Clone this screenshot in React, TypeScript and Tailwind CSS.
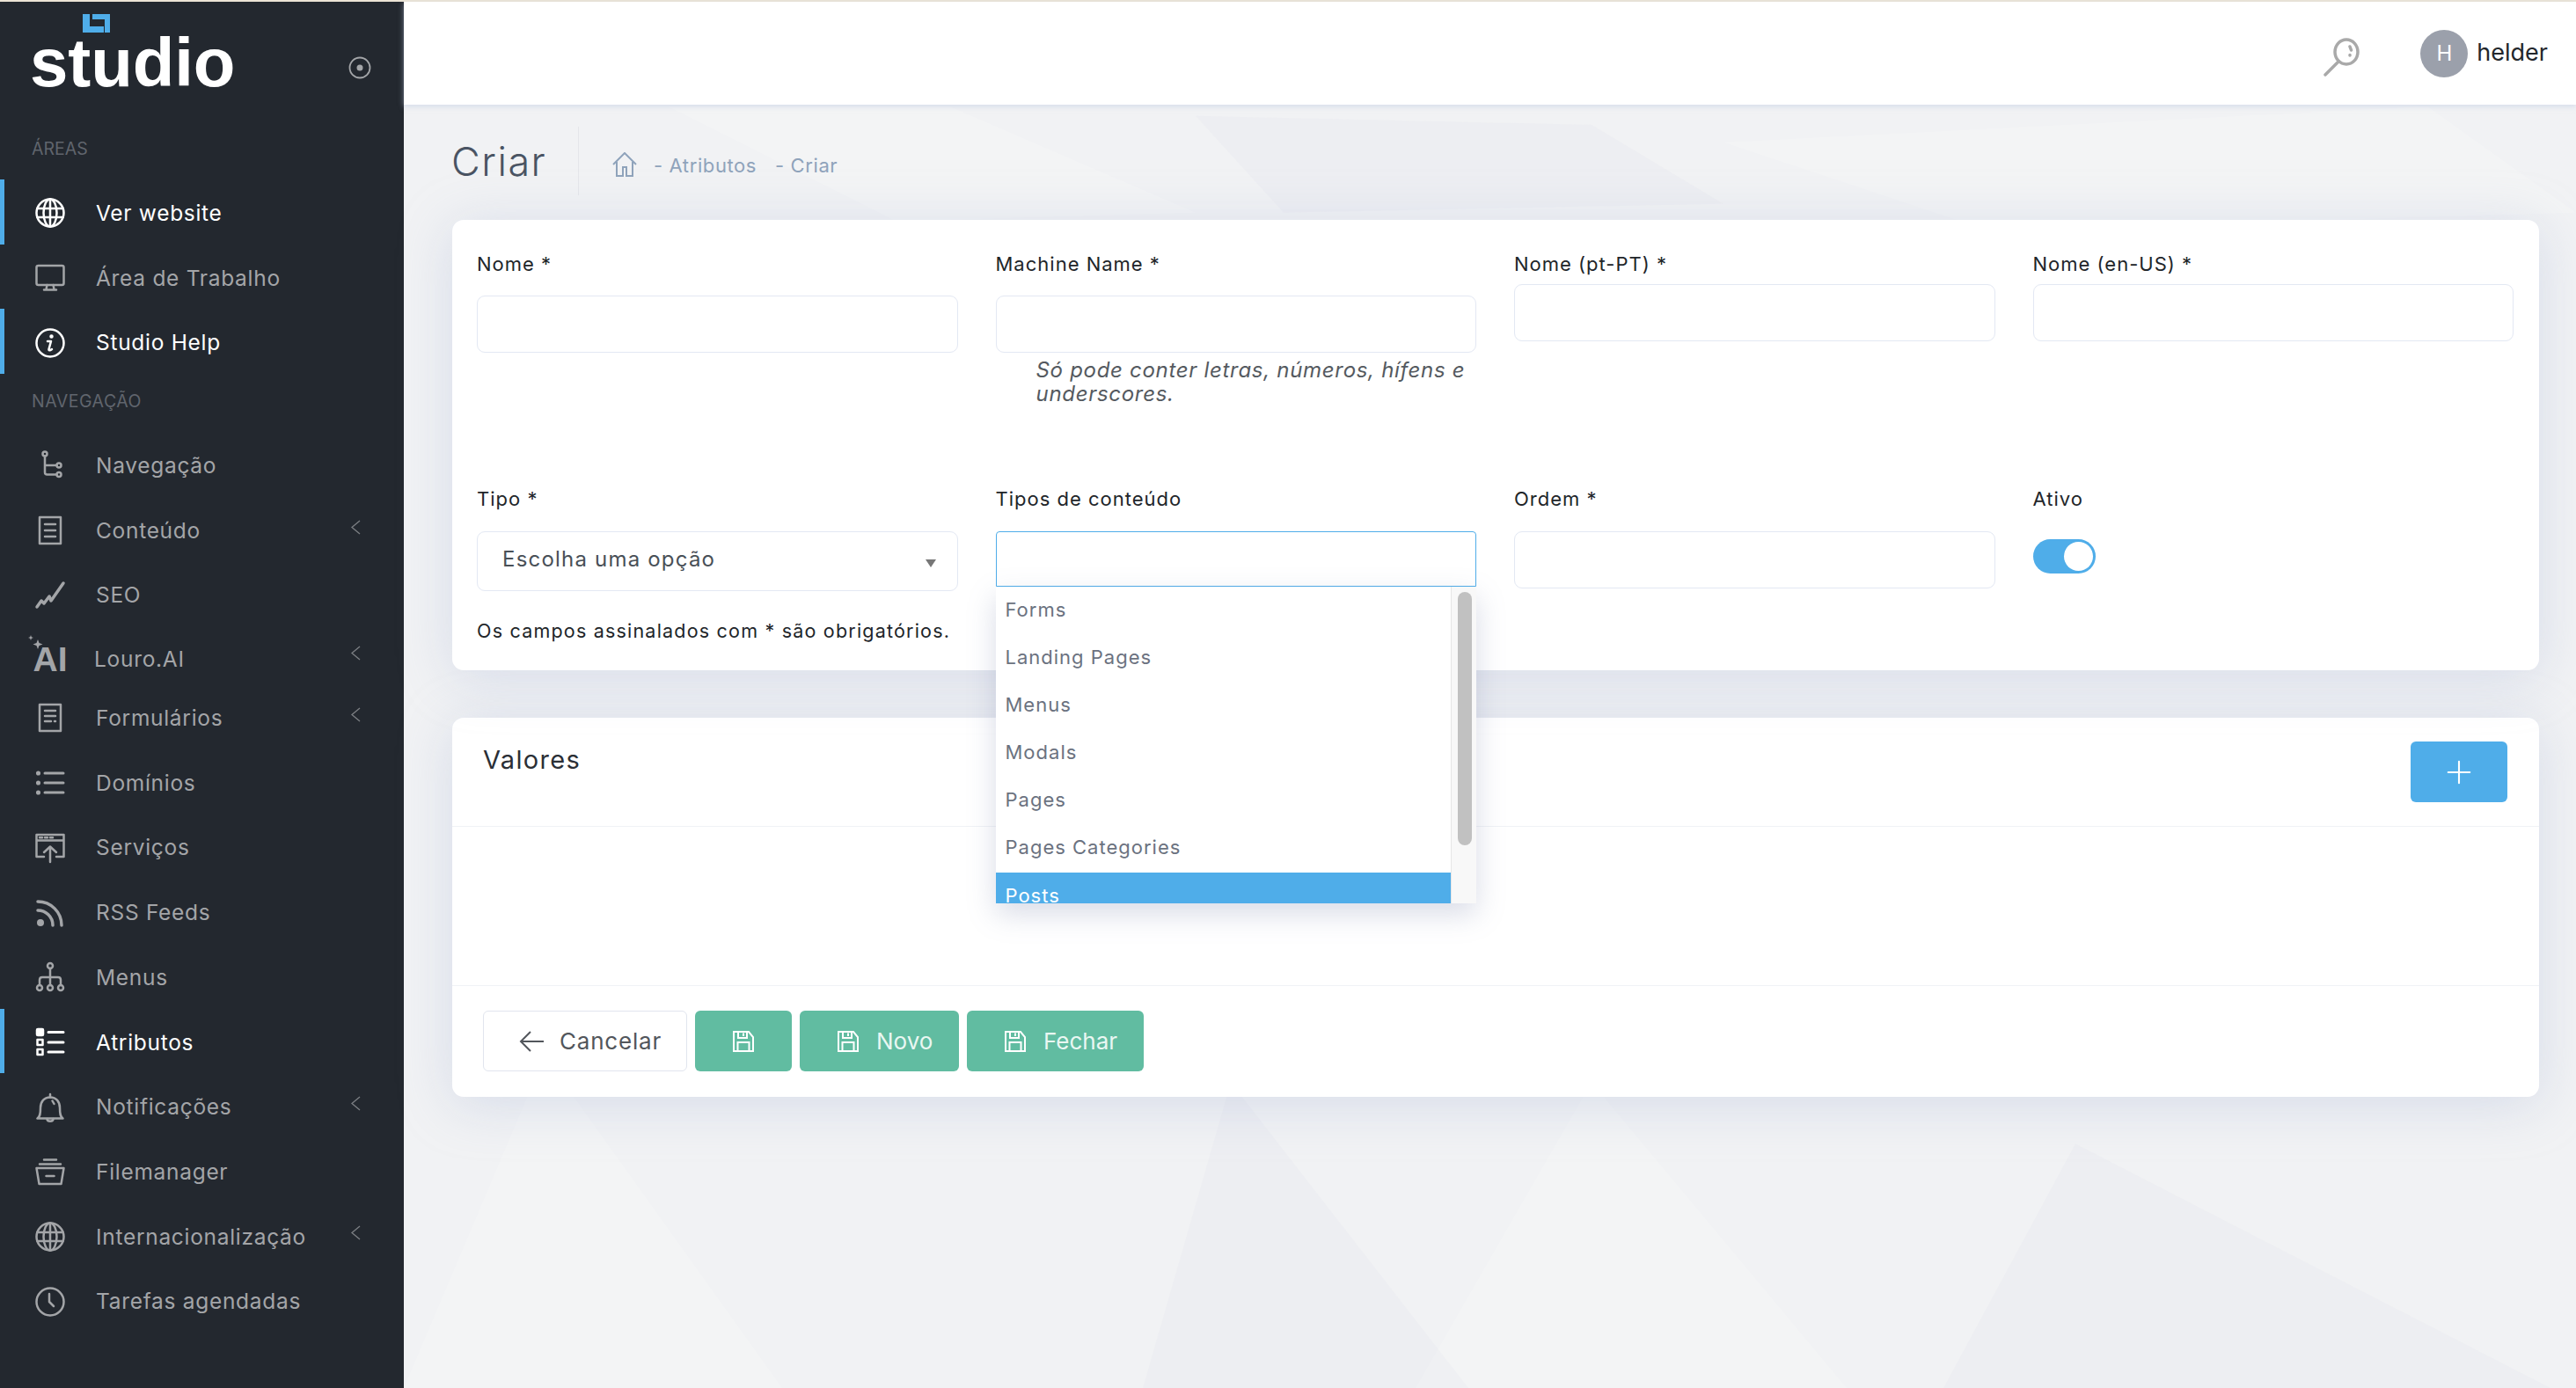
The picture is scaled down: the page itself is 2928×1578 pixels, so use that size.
import type { ReactNode } from 'react'
import { Plus } from 'lucide-react'

const font = { fontFamily: 'Inter, "Open Sans", sans-serif' }

function Ic({ children }: { children: ReactNode }) {
  return (
    <svg width="36" height="36" viewBox="0 0 36 36" fill="none" stroke="currentColor" strokeWidth="2.5" strokeLinecap="round" strokeLinejoin="round">
      {children}
    </svg>
  )
}

const GlobeIcon = () => (
  <Ic>
    <circle cx="18" cy="18" r="15.5" />
    <ellipse cx="18" cy="18" rx="7.5" ry="15.5" />
    <path d="M18 2.5v31M3.5 13h29M3.5 23h29" />
  </Ic>
)
const MonitorIcon = () => (
  <Ic>
    <rect x="2.5" y="4" width="31" height="22" rx="2" />
    <path d="M14.5 26l-1 5M21.5 26l1 5M11 31.5h14" />
  </Ic>
)
const InfoIcon = () => (
  <Ic>
    <circle cx="18" cy="18" r="15.5" />
    <circle cx="19.5" cy="10.5" r="1" fill="currentColor" />
    <path d="M15 16h4l-2.5 9c-.3 1.5 1 2 3.5 0" />
  </Ic>
)
const TreeIcon = () => (
  <Ic>
    <circle cx="12" cy="5" r="2.5" />
    <circle cx="28" cy="18" r="2.5" />
    <circle cx="28" cy="28.5" r="2.5" />
    <path d="M12 7.5V26c0 2 1 2.5 2.5 2.5h11M12 18h13.5" />
  </Ic>
)
const DocIcon = () => (
  <Ic>
    <rect x="6" y="3" width="24" height="30" />
    <path d="M12 11h12M12 18h12M12 25h12" />
  </Ic>
)
const FormIcon = () => (
  <Ic>
    <rect x="6" y="3" width="24" height="30" />
    <path d="M12 10h12M12 16h12M12 22h7M23 22h1" />
  </Ic>
)
const SeoIcon = () => (
  <Ic>
    <path strokeWidth="3.5" d="M3 31l5-7 3 3 6-8 2 5 14-20" />
  </Ic>
)
const ListIcon = () => (
  <Ic>
    <circle cx="4.5" cy="7" r="1.3" fill="currentColor" />
    <circle cx="4.5" cy="18" r="1.3" fill="currentColor" />
    <circle cx="4.5" cy="29" r="1.3" fill="currentColor" />
    <path strokeWidth="3" d="M12 7h21M12 18h21M12 29h21" />
  </Ic>
)
const ServiceIcon = () => (
  <Ic>
    <path d="M11 28H2.5V3h31v25H25M2.5 9.5h31M6 6.3h3M12 6.3h3M18 6.3h3" />
    <path d="M18 34V17M11 23l7-6.5 7 6.5" />
  </Ic>
)
const RssIcon = () => (
  <Ic>
    <circle cx="7" cy="29" r="4" fill="currentColor" stroke="none" />
    <path strokeWidth="3.5" d="M4 15c9 0 17 7 17 17M4 5c15 0 27 12 27 27" />
  </Ic>
)
const MenuTreeIcon = () => (
  <Ic>
    <circle cx="18" cy="5" r="3" />
    <circle cx="6" cy="30" r="3" />
    <circle cx="18" cy="30" r="3" />
    <circle cx="30" cy="30" r="3" />
    <path d="M18 8v19M6 27v-6c0-2 1-3 3-3h18c2 0 3 1 3 3v6" />
  </Ic>
)
const AttrIcon = () => (
  <Ic>
    <rect x="3" y="3" width="7" height="7" rx="1" fill="currentColor" />
    <rect x="3.5" y="15" width="6" height="6" />
    <rect x="3.5" y="26" width="6" height="6" />
    <path strokeWidth="3" d="M16 6.5h17M16 18h17M16 29h17" />
  </Ic>
)
const BellIcon = () => (
  <Ic>
    <path d="M3.5 30.5h29c-3-2-3.5-5-3.5-12 0-7-4-12-11-12s-11 5-11 12c0 7-.5 10-3.500 12z" />
    <path d="M18 6.500V3M14.500 31c0 3.500 7 3.500 7 0M20.500 10.500l2 3.500" />
  </Ic>
)
const BasketIcon = () => (
  <Ic>
    <path d="M2.5 14l3 18h25l3-18-31 0M6 9.500h24M11 4.500h14M13.500 23h9" />
  </Ic>
)
const ClockIcon = () => (
  <Ic>
    <circle cx="18" cy="18" r="15.5" />
    <path d="M17 9v9l5 5" />
  </Ic>
)
const AiIcon = () => (
  <span className="relative flex w-[36px] h-[36px] items-end justify-center">
    <svg className="absolute left-[-7px] top-[-9px]" width="20" height="20" viewBox="0 0 20 20" fill="currentColor">
      <path d="M11 5l1.5 4 4 1.5-4 1.5-1.500 4-1.500-4-4-1.500 4-1.500zM3 0l.8 2.2L6 3l-2.200.8L3 6l-.8-2.200L0 3l2.200-.8z" />
    </svg>
    <span className="text-[39px] leading-[34px] font-bold" style={{ fontFamily: '"Liberation Sans", sans-serif' }}>AI</span>
  </span>
)

const SaveIcon = () => (
  <svg width="26" height="26" viewBox="0 0 26 26" fill="none" stroke="white" strokeWidth="2">
    <path d="M2 2h17l5 6v16H2zM7 2v7h10V2M6.5 24V14h13v10M13 3.5V7" />
  </svg>
)

function Chevron() {
  return (
    <svg className="absolute left-[398px] top-1/2 -translate-y-[12px]" width="12" height="20" viewBox="0 0 12 20" fill="none" stroke="#7c7f84" strokeWidth="1.3">
      <path d="M11 2L2 9.5l9 7.5" />
    </svg>
  )
}

type Item = { label: string; icon: ReactNode; on?: boolean; arrow?: boolean; h?: string; cls?: string }

function NavItem({ label, icon, on, arrow, h, cls }: Item) {
  return (
    <div className={`relative flex items-center ${h ?? 'h-[73.7px] pt-[3px]'} ${on ? 'text-white' : 'text-[#a3a5a8]'}`}>
      {on && <span className="absolute left-0 top-0 bottom-0 w-[5px] bg-[#4fade9]" />}
      <span className="flex w-[36px] h-[36px] ml-[39px] shrink-0 items-center justify-center">{icon}</span>
      <span className={`text-[24.5px] tracking-[0.7px] ${cls ?? 'ml-[34px]'}`}>{label}</span>
      {arrow && <Chevron />}
    </div>
  )
}

function Sidebar() {
  return (
    <aside className="w-[459px] shrink-0 bg-[#23282f] relative">
      <div className="relative h-[130px]">
        <svg className="absolute left-[94px] top-[14px]" width="31" height="21" viewBox="0 0 31 21" fill="#4fade9">
          <path d="M0 0h8v14h16v7H0zM11 0h20v21h-6V6H11z" />
        </svg>
        <span className="absolute left-[34px] top-[25px] text-[78px] leading-[88px] font-bold text-white" style={{ fontFamily: '"Liberation Sans", Arial, sans-serif', letterSpacing: '-0.1px' }}>studio</span>
        <svg className="absolute left-[396px] top-[62px]" width="26" height="26" viewBox="0 0 26 26" fill="none" stroke="#a3a5a8" strokeWidth="1.8">
          <circle cx="13" cy="13" r="11.5" />
          <circle cx="13" cy="13" r="3.5" fill="#a3a5a8" stroke="none" />
        </svg>
      </div>
      <div className="h-[72px] pt-[24px] pl-[36px] text-[19.5px] leading-[26px] text-[#60656d]">ÁREAS</div>
      <NavItem label="Ver website" icon={<GlobeIcon />} on />
      <NavItem label="Área de Trabalho" icon={<MonitorIcon />} />
      <NavItem label="Studio Help" icon={<InfoIcon />} on />
      <div className="h-[66px] pt-[18px] pl-[36px] text-[19.5px] leading-[26px] tracking-[0.5px] text-[#60656d]">NAVEGAÇÃO</div>
      <NavItem label="Navegação" icon={<TreeIcon />} />
      <NavItem label="Conteúdo" icon={<DocIcon />} arrow />
      <NavItem label="SEO" icon={<SeoIcon />} />
      <NavItem label="Louro.AI" icon={<AiIcon />} arrow h="h-[66px] pt-[8px]" cls="ml-[32px]" />
      <NavItem label="Formulários" icon={<FormIcon />} arrow />
      <NavItem label="Domínios" icon={<ListIcon />} />
      <NavItem label="Serviços" icon={<ServiceIcon />} />
      <NavItem label="RSS Feeds" icon={<RssIcon />} />
      <NavItem label="Menus" icon={<MenuTreeIcon />} />
      <NavItem label="Atributos" icon={<AttrIcon />} on />
      <NavItem label="Notificações" icon={<BellIcon />} arrow />
      <NavItem label="Filemanager" icon={<BasketIcon />} />
      <NavItem label="Internacionalização" icon={<GlobeIcon />} arrow />
      <NavItem label="Tarefas agendadas" icon={<ClockIcon />} />
    </aside>
  )
}

const inputCls = 'w-full bg-white border border-[#e3e8f3] rounded-[9px]'
const labelCls = 'block text-[22px] leading-[33px] tracking-[1px] text-[#212529]'

function Dropdown() {
  const opts = ['Forms', 'Landing Pages', 'Menus', 'Modals', 'Pages', 'Pages Categories']
  return (
    <div className="absolute left-0 right-0 top-[63px] h-[360px] flex overflow-hidden bg-white shadow-[0_12px_30px_rgba(120,130,170,0.28)]">
      <ul className="flex-1">
        {opts.map((o) => (
          <li key={o} className="h-[54px] pl-[11px] pb-[2px] flex items-center text-[22px] tracking-[1px] text-[#6b7280]">{o}</li>
        ))}
        <li className="h-[36px] mt-[1px] pl-[11px] pt-[10px] text-[22px] leading-[33px] tracking-[1px] text-white bg-[#4fade9]">Posts</li>
      </ul>
      <div className="relative w-[29px] bg-[#f8f8f8] border-l border-[#e6e6e6]">
        <span className="absolute left-[7px] top-[6px] w-[16px] h-[288px] rounded-full bg-[#c1c1c1]" />
      </div>
    </div>
  )
}

function Background() {
  return (
    <svg className="absolute inset-0 w-full h-full" viewBox="0 0 2469 1578" preserveAspectRatio="none">
      <g fill="#ffffff" fillOpacity="0.16">
        <polygon points="0,1578 160,1200 430,1578" />
        <polygon points="1150,1578 1350,1230 1640,1578" />
        <polygon points="300,119 620,119 900,240 560,250" />
        <polygon points="1500,160 2300,119 2469,240 1800,260" />
      </g>
      <g fill="#dfe2ea" fillOpacity="0.2">
        <polygon points="840,1578 940,1230 1210,1578" />
        <polygon points="1750,1578 1900,1300 2440,1578" />
        <polygon points="900,130 1350,140 1500,230 1000,240" />
      </g>
    </svg>
  )
}

const cardShadow = 'shadow-[0_8px_60px_rgba(170,185,215,0.38)]'

export default function App() {
  return (
    <div className="w-[2928px] h-[1578px] flex flex-col overflow-hidden bg-[#f1f2f4]" style={font}>
      <div className="h-[2px] bg-[#ece5d6] shrink-0" />
      <div className="flex flex-1 min-h-0">
        <Sidebar />
        <main className="relative flex-1 min-w-0">
          <Background />
          <div className="relative">
            <header className="h-[117px] bg-white flex items-center justify-end shadow-[0_2px_6px_rgba(190,200,225,0.55)]">
              <svg className="mr-[69px] mt-[8px]" width="42" height="44" viewBox="0 0 42 44" fill="none" stroke="#a9a9a9" strokeWidth="3.5" strokeLinecap="round">
                <ellipse cx="27" cy="16" rx="13" ry="14" />
                <path d="M18 27L3 42M31 10l1.5 4M31 19.5v.5" />
              </svg>
              <span className="flex w-[54px] h-[54px] rounded-full bg-[#9ba0ab] text-white text-[24px] items-center justify-center mr-[10px]">H</span>
              <span className="text-[27px] text-[#23272c] mr-[32px]">helder</span>
            </header>
            <div className="h-[131px] flex items-start pl-[54px]">
              <h1 className="mt-[30px] w-[144px] shrink-0 text-[45px] leading-[70px] tracking-[1.5px] text-[#4a5463] font-light">Criar</h1>
              <div className="w-px h-[78px] mt-[25px] bg-[#e4e6ea] shrink-0" />
              <svg className="ml-[38px] mt-[54px]" width="28" height="28" viewBox="0 0 28 28" fill="none" stroke="#8fa3bb" strokeWidth="2">
                <path d="M1 14L14 1l13 13M5 11v16h7V17h4v10h7V11" />
              </svg>
              <span className="ml-[19px] mt-[53px] text-[22px] leading-[33px] tracking-[0.6px] text-[#8fa3bb]">- Atributos</span>
              <span className="ml-[21px] mt-[53px] text-[22px] leading-[33px] tracking-[0.6px] text-[#8fa3bb]">- Criar</span>
            </div>

            <section className={`relative ml-[55px] mr-[42px] bg-white rounded-[13px] h-[512px] pt-[34px] pl-[28px] pr-[29px] ${cardShadow}`}>
              <div className="grid grid-cols-4 gap-x-[43px] h-[267px]">
                <div>
                  <label className={labelCls}>Nome *</label>
                  <div className={`${inputCls} h-[65px] mt-[19px]`} />
                </div>
                <div>
                  <label className={labelCls}>Machine Name *</label>
                  <div className={`${inputCls} h-[65px] mt-[19px]`} />
                  <p className="ml-[46px] mt-[6px] text-[24px] leading-[27px] tracking-[0.7px] italic text-[#555a60]">Só pode conter letras, números, hífens e underscores.</p>
                </div>
                <div>
                  <label className={labelCls}>Nome (pt-PT) *</label>
                  <div className={`${inputCls} h-[65px] mt-[6px]`} />
                </div>
                <div>
                  <label className={labelCls}>Nome (en-US) *</label>
                  <div className={`${inputCls} h-[65px] mt-[6px]`} />
                </div>
              </div>
              <div className="grid grid-cols-4 gap-x-[43px]">
                <div>
                  <label className={labelCls}>Tipo *</label>
                  <div className={`${inputCls} relative h-[68px] mt-[20px] pl-[28px] flex items-center text-[24px] tracking-[1.2px] text-[#495057]`}>
                    <span className="-mt-[4px]">Escolha uma opção</span>
                    <span className="absolute right-[24px] top-[31px] w-0 h-0 border-x-[6px] border-x-transparent border-t-[9px] border-t-[#777]" />
                  </div>
                  <p className="mt-[30px] text-[21.5px] leading-[30px] tracking-[1.2px] text-[#212529] whitespace-nowrap">Os campos assinalados com * são obrigatórios.</p>
                </div>
                <div className="relative">
                  <label className={labelCls}>Tipos de conteúdo</label>
                  <div className="relative mt-[20px]">
                    <div className="h-[63px] bg-white border-[1.5px] border-[#4fade9] rounded-t-[4px]" />
                    <Dropdown />
                  </div>
                </div>
                <div>
                  <label className={labelCls}>Ordem *</label>
                  <div className={`${inputCls} h-[65px] mt-[20px]`} />
                </div>
                <div>
                  <label className={labelCls}>Ativo</label>
                  <div className="mt-[29px] w-[71px] h-[39px] rounded-full bg-[#4fade9] flex justify-end items-center pr-[3px]">
                    <span className="w-[33px] h-[33px] rounded-full bg-white" />
                  </div>
                </div>
              </div>
            </section>

            <section className={`ml-[55px] mr-[42px] mt-[54px] bg-white rounded-[13px] ${cardShadow}`}>
              <div className="h-[124px] border-b border-[#f0f2f6] flex items-start justify-between pl-[35px] pr-[36px]">
                <h2 className="mt-[26px] text-[29px] leading-[44px] tracking-[1.3px] text-[#2b2f36]">Valores</h2>
                <button className="mt-[27px] w-[110px] h-[69px] rounded-[6px] bg-[#4fade9] flex items-center justify-center">
                  <Plus size={42} color="white" strokeWidth={1.2} />
                </button>
              </div>
              <div className="h-[181px] border-b border-[#f0f2f6]" />
              <div className="h-[126px] pt-[28px] pl-[35px] flex items-start gap-[9px] text-[26px]">
                <button className="h-[69px] w-[232px] bg-white border border-[#e1e5ee] rounded-[6px] flex items-center pl-[40px] gap-[18px] tracking-[0.8px] text-[#52565c]">
                  <svg width="28" height="24" viewBox="0 0 28 24" fill="none" stroke="#52565c" strokeWidth="2">
                    <path d="M28 12H2M13 1L2 12l11 11" />
                  </svg>
                  Cancelar
                </button>
                <button className="h-[69px] w-[110px] bg-[#61bca1] rounded-[6px] flex items-center justify-center"><SaveIcon /></button>
                <button className="h-[69px] w-[181px] bg-[#61bca1] rounded-[6px] flex items-center pl-[42px] gap-[19px] text-[#e9f7f2]"><SaveIcon />Novo</button>
                <button className="h-[69px] w-[201px] bg-[#61bca1] rounded-[6px] flex items-center pl-[42px] gap-[19px] text-[#e9f7f2]"><SaveIcon />Fechar</button>
              </div>
            </section>
          </div>
        </main>
      </div>
    </div>
  )
}
